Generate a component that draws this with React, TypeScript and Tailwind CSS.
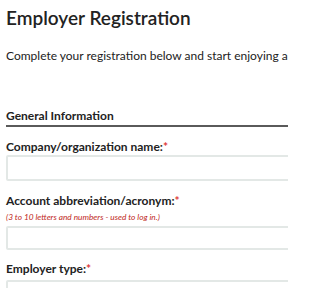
export default function App() {
  return (
    <div className="w-[288px] h-[288px] overflow-hidden bg-white text-[#222] font-['Lato',sans-serif]">
      <div className="w-[480px] pl-[6px] pt-[6px]">
        <h1 className="text-[19px] leading-[24px] font-semibold">Employer Registration</h1>
        <p className="mt-[18px] text-[12px] leading-[16px]">
          Complete your registration below and start enjoying all the benefits.
        </p>

        <h2 className="mt-[45px] text-[12px] leading-[14px] font-bold pb-[2px] border-b-2 border-[#5a5a5a]">
          General Information
        </h2>

        <label className="block mt-[13px] text-[12px] leading-[14px] font-bold">
          Company/organization name:<span className="text-[#e03a3a]">*</span>
        </label>
        <div className="mt-[1px] h-[26px] rounded-[2px] border-2 border-[#e3e8e6]" />

        <label className="block mt-[13px] text-[12px] leading-[14px] font-bold">
          Account abbreviation/acronym:<span className="text-[#e03a3a]">*</span>
        </label>
        <div className="mt-[4px] text-[8.3px] leading-[10px] italic text-[#c0281c]">
          (3 to 10 letters and numbers - used to log in.)
        </div>
        <div className="mt-[4px] h-[24px] rounded-[2px] border-2 border-[#e3e8e6]" />

        <label className="block mt-[12px] text-[12px] leading-[14px] font-bold">
          Employer type:<span className="text-[#e03a3a]">*</span>
        </label>
        <div className="mt-[4px] h-[26px] rounded-[2px] border-2 border-[#e3e8e6]" />
      </div>
    </div>
  );
}
